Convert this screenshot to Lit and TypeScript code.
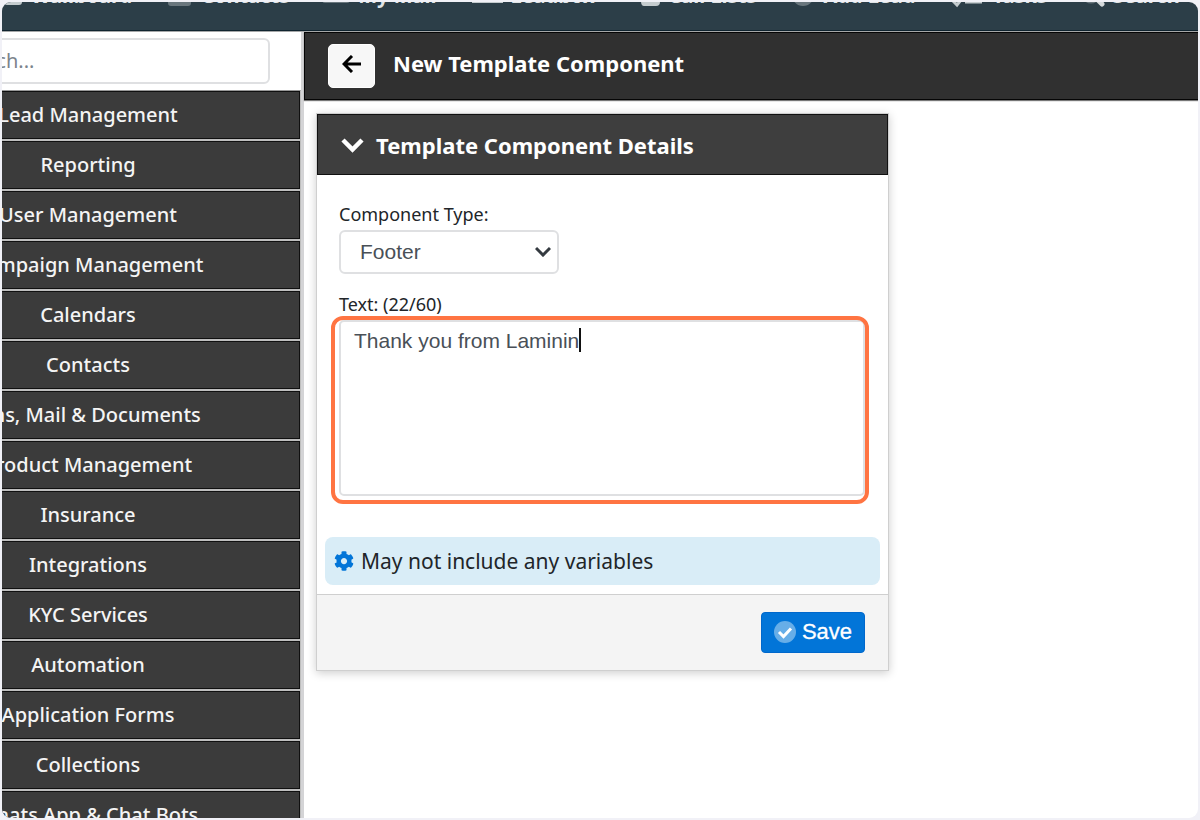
import { LitElement, html, css, svg } from "lit";
import { customElement, state } from "lit/decorators.js";
import { styleMap } from "lit/directives/style-map.js";

const navItems = [
  { label: "Wallboard", width: 19, icon: svg`<rect x="0" y="4" width="18" height="17" rx="3" fill="#c4cbce"/>` },
  { label: "Contacts", width: 25, icon: svg`<rect x="0" y="2" width="23" height="20" rx="3" fill="#69767d"/>` },
  { label: "My Mail", width: 25, icon: svg`<rect x="-3" y="2" width="28" height="17" rx="3" fill="#69767d"/>` },
  { label: "Leadbox", width: 30, icon: svg`<path d="M4 3h22l5 9v7H0v-7z" fill="#c4cbce"/>` },
  { label: "Call Lists", width: 30, icon: svg`<g transform="translate(10 0)"><path d="M0 17q0-3 3-3l2-12h14v16q0 4-4 4H3q-3 0-3-5z" fill="#c4cbce"/><path d="M8 17h5" stroke="#2c3e48" stroke-width="2"/></g>` },
  { label: "Add Lead", width: 23, icon: svg`<circle cx="11" cy="11" r="11" fill="#69767d"/>` },
  { label: "Tasks", width: 33, icon: svg`<path d="M2 17l4 4 4-5M14 18h17" stroke="#c4cbce" stroke-width="3" fill="none"/>` },
  { label: "Search", width: 22, icon: svg`<circle cx="8" cy="10" r="8" fill="none" stroke="#69767d" stroke-width="3"/><path d="M13 14l6 6" stroke="#d5dadc" stroke-width="5" stroke-linecap="round"/>` },
];

const menu = [
  "Lead Management", "Reporting", "User Management", "Campaign Management", "Calendars",
  "Contacts", "Sms, Mail & Documents", "Product Management", "Insurance", "Integrations",
  "KYC Services", "Automation", "Application Forms", "Collections", "Whats App & Chat Bots",
];

@customElement("app-root")
export class AppRoot extends LitElement {
  @state() private text = "Thank you from Laminin";
  @state() private caret = 0;

  static styles = css`
    :host { display: block; height: 100vh; box-sizing: border-box; padding: 2px; background: #f1f1f7; font-family: "Noto Sans", "Open Sans", sans-serif; color: #212529; }
    * { box-sizing: border-box; }
    .frame { height: 100%; overflow: hidden; border-radius: 9px; background: #fff; }
    .page { margin: -32px 0 0 -126px; }
    .topbar { display: flex; gap: 36px; height: 61px; padding: 14px 0 0 128px; background: #2c3e48; border-bottom: 1px solid #10242f; overflow: hidden; }
    .topbar a { flex: none; display: flex; gap: 8px; color: #dfe3e5; text-decoration: none; font-size: 20px; line-height: 24px; font-weight: 700; white-space: nowrap; }
    .nav-icon { height: 24px; overflow: visible; }
    .columns { display: flex; border-top: 1px solid #a5a7a8; }
    .side { flex: none; width: 425px; }
    .search { padding: 6px 31px 6px 12px; }
    .search input { display: block; width: 100%; height: 46px; border: 2px solid #dfe0e2; border-radius: 6px; padding: 0 0 2px 65px; font: 20px "Noto Sans", sans-serif; color: #6c757d; background: #fff; }
    .search input::placeholder { color: #7b848c; opacity: 1; }
    .menu { display: flex; flex-direction: column; gap: 2px; background: #bebebe; border-top: 1px solid #999; border-right: 1px solid #bebebe; }
    .menu a { height: 48px; border: 1px solid #101010; background: #3b3b3b; color: #f4f4f4; font-size: 20px; line-height: 46px; font-weight: 500; text-align: center; text-decoration: none; }
    .main { flex: 1; min-width: 0; border-left: 3px solid #d4d4d6; }
    .title { display: flex; align-items: center; gap: 18px; height: 68px; padding: 0 23px; background: #303030; border: 1px solid #050505; border-right: 0; box-shadow: 0 1px 1px #777; color: #fff; }
    h1, h2 { margin: 0; font-size: 22px; line-height: 30px; font-weight: 700; }
    h1 { padding-bottom: 6px; }
    .back { display: grid; place-items: center; width: 47px; height: 44px; padding: 0 0 4px; border: 1px solid #fff; border-radius: 5px; background: #f7f7f7; }
    .card { width: 573px; margin: 13px 12px; border: 1px solid #cfcfcf; box-shadow: 0 2px 9px #0003; background: #fff; }
    .card-head { display: flex; align-items: center; gap: 12px; height: 61px; padding: 0 23px; background: #3e3e3e; border: 1px solid #111; color: #fff; }
    .body { padding: 25px 8px 9px; }
    .fields { padding: 0 15px 0 14px; }
    label { display: block; font-size: 18px; line-height: 28px; }
    .select-wrap { position: relative; width: 220px; margin: 2px 0 16px; }
    select { display: block; width: 100%; height: 44px; appearance: none; border: 2px solid #dfe0e2; border-radius: 6px; padding: 0 19px 2px; background: #fff; color: #495057; font: 21px "Liberation Sans", sans-serif; }
    .chev { position: absolute; right: 8px; top: 16px; pointer-events: none; }
    .text-wrap { position: relative; margin-top: 2px; }
    textarea { display: block; width: 100%; height: 176px; resize: none; outline: none; border: 2px solid #dfe0e2; border-radius: 5px; padding: 6px 13px; color: #495057; background: #fff; font: 21px/26px "Liberation Sans", sans-serif; overflow: hidden; }
    .ring { position: absolute; inset: -4px -4px -8px -8px; border: 4px solid #ff7442; border-radius: 12px; pointer-events: none; }
    .caret { position: absolute; top: 8px; width: 2px; height: 24px; background: #111; pointer-events: none; }
    .note { display: flex; align-items: center; gap: 7px; height: 48px; margin-top: 41px; padding: 0 9px; border-radius: 8px; background: #d9edf7; font-size: 21px; }
    .foot { display: flex; justify-content: flex-end; padding: 17px 23px; border-top: 1px solid #cfcfcf; background: #f4f4f4; }
    .save { display: flex; align-items: center; justify-content: center; gap: 6px; width: 104px; height: 41px; padding: 0 0 2px; border: 1px solid #0068cc; border-radius: 4px; background: #0275d8; color: #fff; font: 22px "Liberation Sans", sans-serif; -webkit-text-stroke: 0.3px #fff; }
  `;

  protected firstUpdated() {
    this.placeCaret();
  }

  private placeCaret() {
    const ctx = document.createElement("canvas").getContext("2d")!;
    ctx.font = '21px "Liberation Sans", sans-serif';
    this.caret = 15 + Math.round(ctx.measureText(this.text).width);
  }

  private onInput(e: Event) {
    this.text = (e.target as HTMLTextAreaElement).value;
    this.placeCaret();
  }

  render() {
    return html`
      <div class="frame"><div class="page">
        <nav class="topbar">
          ${navItems.map((n) => html`<a href="#"><svg class="nav-icon" width=${n.width} height="24">${n.icon}</svg>${n.label}</a>`)}
        </nav>
        <div class="columns">
          <aside class="side">
            <div class="search"><input type="search" aria-label="Search" placeholder="Search..." /></div>
            <nav class="menu">${menu.map((m) => html`<a href="#">${m}</a>`)}</nav>
          </aside>
          <main class="main">
            <header class="title">
              <button class="back" aria-label="Back">
                <svg width="20" height="18" viewBox="0 0 20 18" fill="none" stroke="#000" stroke-width="3"><path d="M10 1L2 9l8 8M2.500 9H19"/></svg>
              </button>
              <h1>New Template Component</h1>
            </header>
            <section class="card">
              <div class="card-head">
                <svg width="23" height="16" viewBox="0 0 23 16" fill="none" stroke="#fff" stroke-width="4.500"><path d="M2 3l9.500 9.500L21 3"/></svg>
                <h2>Template Component Details</h2>
              </div>
              <div class="body">
                <div class="fields">
                  <label for="type">Component Type:</label>
                  <div class="select-wrap">
                    <select id="type"><option>Footer</option></select>
                    <svg class="chev" width="16" height="11" viewBox="0 0 16 11" fill="none" stroke="#343a40" stroke-width="3"><path d="M1 2l7 7 7-7"/></svg>
                  </div>
                  <label for="text">Text: (${this.text.length}/60)</label>
                  <div class="text-wrap">
                    <textarea id="text" maxlength="60" spellcheck="false" .value=${this.text} @input=${this.onInput}></textarea>
                    <span class="caret" style=${styleMap({ left: `${this.caret}px` })}></span>
                    <div class="ring"></div>
                  </div>
                </div>
                <div class="note">
                  <svg width="20" height="20" viewBox="0 0 512 512" fill="#0275d8"><path d="M487.400 315.700l-42.600-24.600c4.300-23.200 4.300-47 0-70.200l42.600-24.600c4.900-2.800 7.100-8.600 5.500-14-11.100-35.600-30-67.800-54.700-94.600-3.800-4.100-10-5.100-14.800-2.300L380.800 110c-17.900-15.400-38.500-27.300-60.800-35.100V25.800c0-5.600-3.900-10.500-9.400-11.700-36.700-8.200-74.300-7.800-109.200 0-5.500 1.200-9.400 6.100-9.400 11.700V75c-22.200 7.900-42.800 19.800-60.800 35.100L88.700 85.500c-4.900-2.800-11-1.900-14.800 2.300-24.700 26.700-43.600 58.900-54.700 94.600-1.700 5.400.6 11.200 5.500 14L67.300 221c-4.300 23.200-4.300 47 0 70.200l-42.600 24.600c-4.900 2.800-7.100 8.600-5.500 14 11.100 35.600 30 67.800 54.700 94.600 3.800 4.100 10 5.100 14.800 2.300l42.600-24.600c17.900 15.400 38.500 27.300 60.800 35.100v49.200c0 5.600 3.900 10.500 9.400 11.700 36.700 8.200 74.300 7.800 109.200 0 5.500-1.200 9.400-6.100 9.400-11.700v-49.200c22.200-7.900 42.800-19.800 60.800-35.100l42.600 24.600c4.900 2.800 11 1.900 14.800-2.300 24.700-26.700 43.600-58.900 54.700-94.600 1.500-5.500-.7-11.300-5.600-14.100zM256 336c-44.100 0-80-35.900-80-80s35.900-80 80-80 80 35.900 80 80-35.900 80-80 80z"/></svg>
                  <span>May not include any variables</span>
                </div>
              </div>
              <footer class="foot">
                <button class="save">
                  <svg width="22" height="22" viewBox="0 0 22 22" fill="none"><circle cx="11" cy="11" r="11" fill="#67aee8"/><path d="M5 11l4.500 4.500L17 7.500" stroke="#fff" stroke-width="3"/></svg>
                  Save
                </button>
              </footer>
            </section>
          </main>
        </div>
      </div></div>
    `;
  }
}
